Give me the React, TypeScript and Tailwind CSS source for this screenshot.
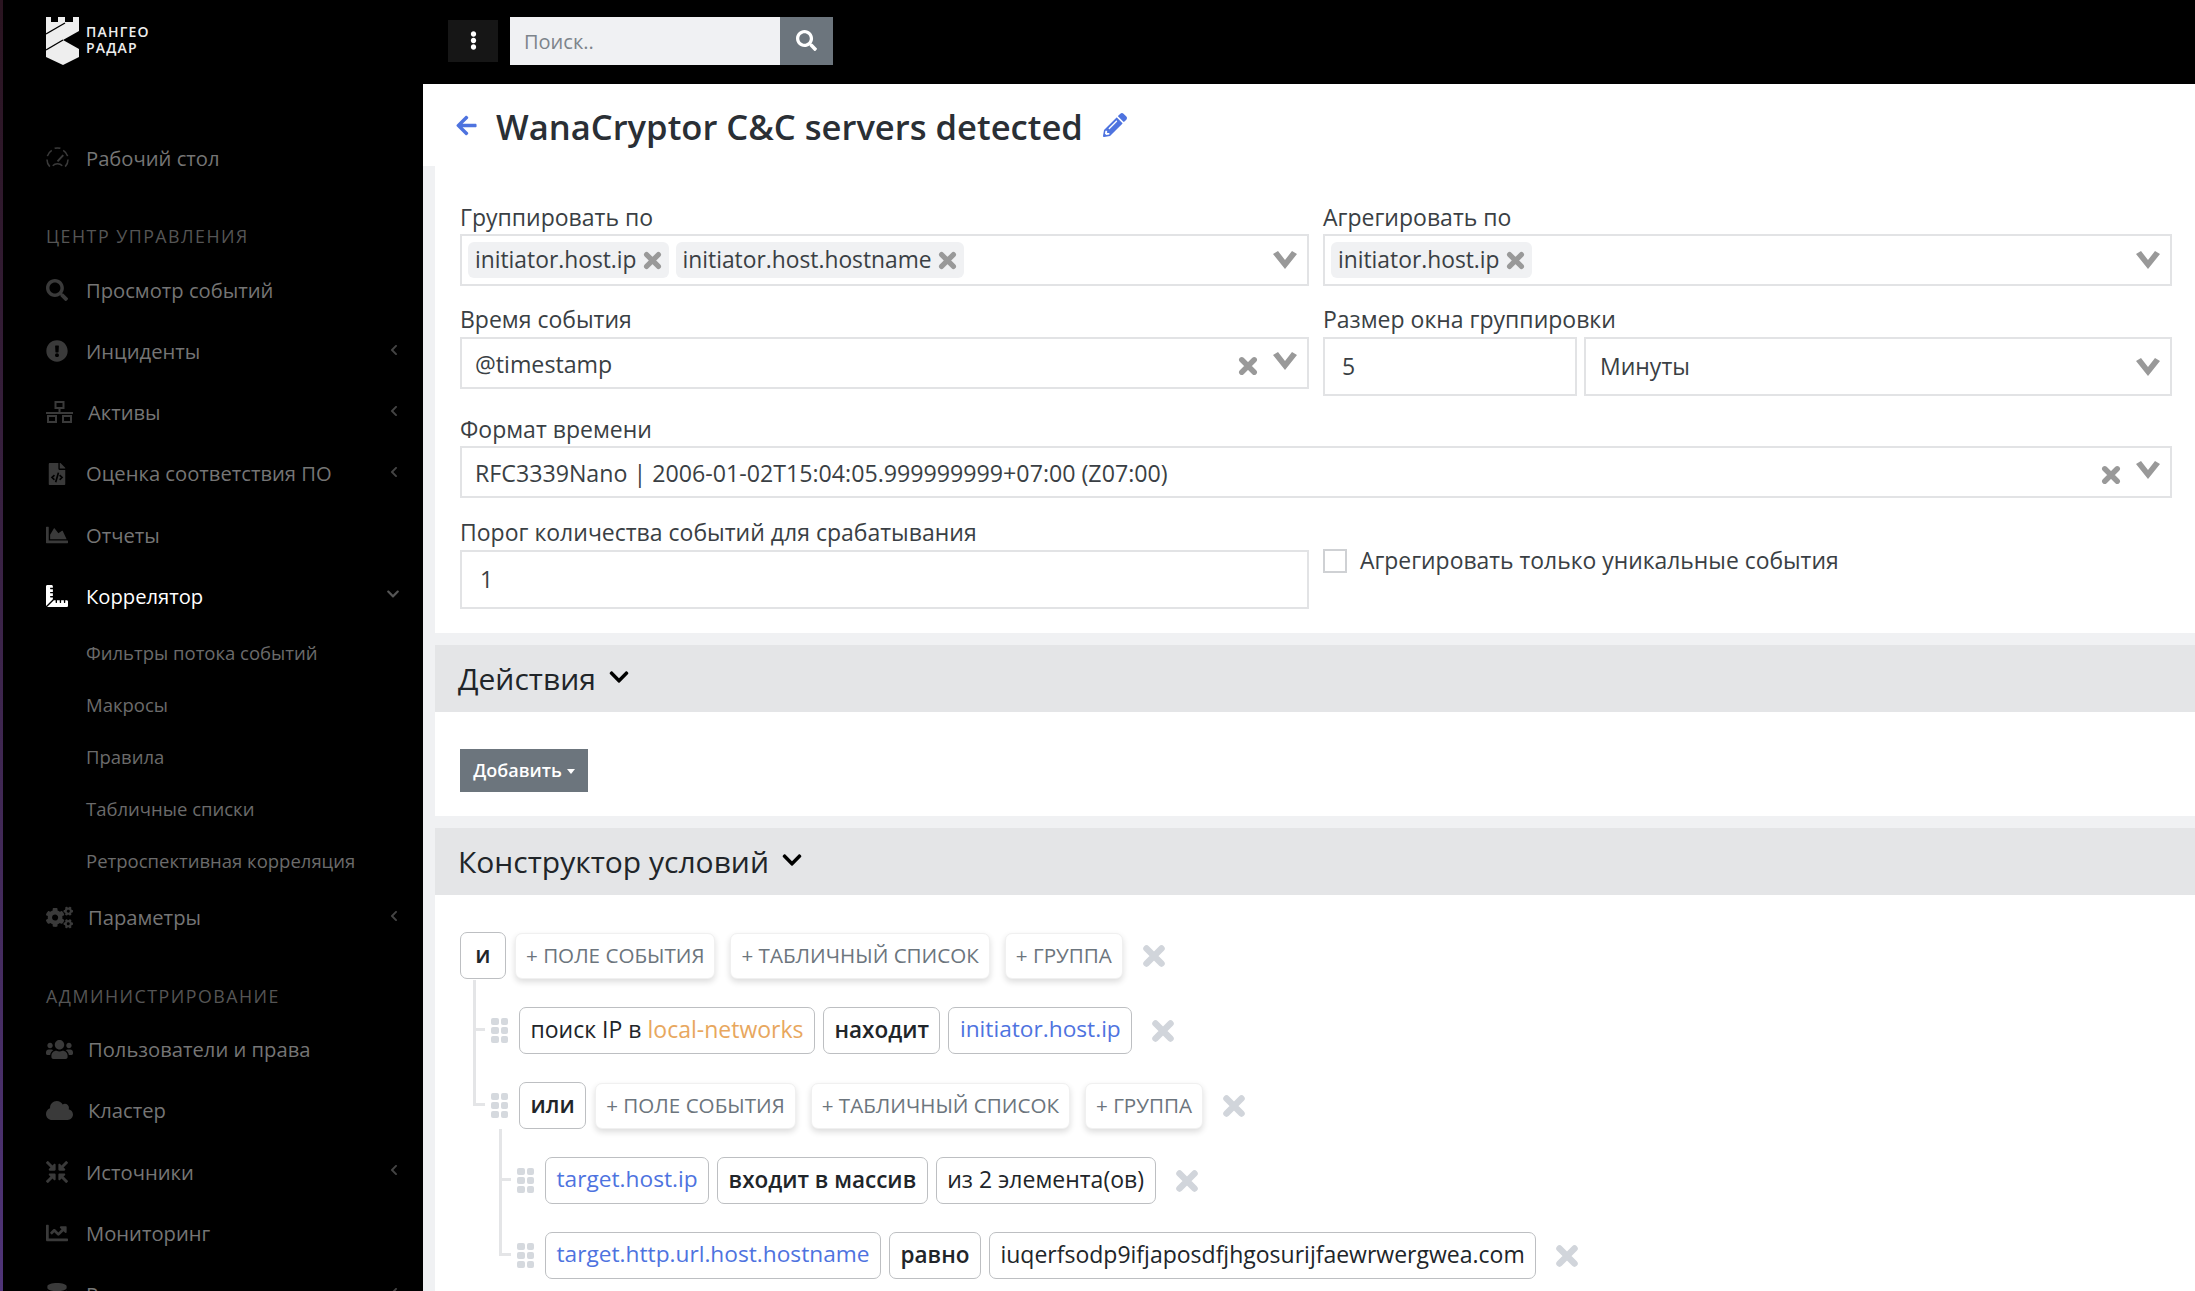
import React from "react";
import {
  FaSearch,
  FaExclamationCircle,
  FaFileCode,
  FaChartArea,
  FaRulerCombined,
  FaCogs,
  FaUsers,
  FaCloud,
  FaCompressArrowsAlt,
  FaChartLine,
  FaDatabase,
  FaChevronLeft,
  FaChevronDown,
  FaEllipsisV,
  FaArrowLeft,
  FaPencilAlt,
} from "react-icons/fa";

const Logo = () => (
  <svg width="34" height="48" viewBox="0 0 34 48" className="shrink-0">
    <polygon
      fill="#eeeeee"
      points="0,0 5,0 5,5 12,5 12,0 19,0 19,5 27,5 27,0 33,0 33,14 17,23 33,32 33,40 17,48 0,40"
    />
    <line x1="0" y1="17" x2="19" y2="6" stroke="#000" strokeWidth="1.4" />
    <line x1="0" y1="33" x2="17" y2="23" stroke="#000" strokeWidth="1.4" />
  </svg>
);

const GaugeIcon = () => (
  <svg width="23" height="23" viewBox="0 0 24 24" fill="none" stroke="currentColor" strokeWidth="1.6">
    <path d="M4 20.5A11 11 0 0 1 1 13M1.4 9.5A11 11 0 0 1 6 3.5M9 1.4A11 11 0 0 1 15 1.4M18 3.5A11 11 0 0 1 22.6 9.5M23 13A11 11 0 0 1 20 20.5" />
    <path d="M7 19.5A7 7 0 0 1 17 19.5" />
    <path d="M12 15L18 8.5" strokeWidth="2" />
  </svg>
);

const NetworkIcon = () => (
  <svg width="27" height="22" viewBox="0 0 27 22" fill="#3a3a3a">
    <path d="M8.5 0h10v8h-10zM10.5 2v4h6V2z" fillRule="evenodd" />
    <rect x="12.5" y="8" width="2" height="4" />
    <rect x="0" y="11" width="27" height="2" />
    <path d="M1 14h10v8H1zM3 16v4h6v-4zM16 14h10v8H16zM18 16v4h6v-4z" fillRule="evenodd" />
  </svg>
);

// thick cross used in selects and condition rows
const Cross = ({ size, className = "" }: { size: number; className?: string }) => (
  <svg width={size} height={size} viewBox="0 0 24 24" className={`shrink-0 ${className}`}>
    <path d="M4.5 4.5L19.5 19.5M19.5 4.5L4.5 19.5" stroke="currentColor" strokeWidth="6.5" strokeLinecap="round" />
  </svg>
);

const Caret = ({ className = "" }: { className?: string }) => (
  <svg width="24" height="18" viewBox="0 0 24 18" fill="#999999" className={`shrink-0 ${className}`}>
    <polygon points="0,3 5,0 12,9 19,0 24,3 12,18" />
  </svg>
);

const NavRow = ({
  icon,
  label,
  wide,
  active,
  arrow,
}: {
  icon: React.ReactNode;
  label: string;
  wide?: boolean;
  active?: boolean;
  arrow?: "left" | "down";
}) => (
  <div className="flex h-[61.2px] shrink-0 items-center pl-[43px] pr-[23px]">
    <span className={`flex items-center ${wide ? "w-[42px]" : "w-[40px]"} ${active ? "text-white" : "text-[#3a3a3a]"}`}>
      {icon}
    </span>
    <span className={`flex-1 text-[20.2px] ${active ? "text-white" : "text-[#757575]"}`}>{label}</span>
    {arrow === "left" && <FaChevronLeft size={12} className="mb-[3px] text-[#444444]" />}
    {arrow === "down" && <FaChevronDown size={14} className="mb-[3px] text-[#555555]" />}
  </div>
);

const SubRow = ({ label }: { label: string }) => (
  <div className="flex h-[52px] shrink-0 items-center pl-[83px] text-[18.5px] text-[#6b6b6b]">{label}</div>
);

const NavHeading = ({ label, className = "h-[70.2px]" }: { label: string; className?: string }) => (
  <div className={`flex shrink-0 items-end pb-[11px] pl-[43px] text-[17.8px] leading-[24px] tracking-[1.5px] text-[#555555] ${className}`}>
    {label}
  </div>
);

const Sidebar = () => (
  <aside className="flex h-full w-[420px] shrink-0 flex-col overflow-hidden bg-black">
    <div className="flex h-[84px] shrink-0 items-start gap-[6px] pl-[43px] pt-[17px]">
      <Logo />
      <div className="mt-[7px] text-[14px] font-semibold leading-[16px] tracking-[1.2px] text-[#eeeeee]">
        <div>ПАНГЕО</div>
        <div>РАДАР</div>
      </div>
    </div>
    <div className="h-[44px] shrink-0" />
    <NavRow icon={<GaugeIcon />} label="Рабочий стол" />
    <NavHeading label="ЦЕНТР УПРАВЛЕНИЯ" />
    <NavRow icon={<FaSearch size={22} />} label="Просмотр событий" />
    <NavRow icon={<FaExclamationCircle size={22} />} label="Инциденты" arrow="left" />
    <NavRow icon={<NetworkIcon />} label="Активы" wide arrow="left" />
    <NavRow icon={<FaFileCode size={22} />} label="Оценка соответствия ПО" arrow="left" />
    <NavRow icon={<FaChartArea size={22} />} label="Отчеты" />
    <NavRow icon={<FaRulerCombined size={22} />} label="Коррелятор" active arrow="down" />
    <SubRow label="Фильтры потока событий" />
    <SubRow label="Макросы" />
    <SubRow label="Правила" />
    <SubRow label="Табличные списки" />
    <SubRow label="Ретроспективная корреляция" />
    <NavRow icon={<FaCogs size={27} />} label="Параметры" wide arrow="left" />
    <NavHeading label="АДМИНИСТРИРОВАНИЕ" className="h-[71px]" />
    <NavRow icon={<FaUsers size={27} />} label="Пользователи и права" wide />
    <NavRow icon={<FaCloud size={27} />} label="Кластер" wide />
    <NavRow icon={<FaCompressArrowsAlt size={22} />} label="Источники" arrow="left" />
    <NavRow icon={<FaChartLine size={22} />} label="Мониторинг" />
    <NavRow icon={<FaDatabase size={22} />} label="Резервирование" arrow="left" />
  </aside>
);

const Topbar = () => (
  <header className="flex h-[84px] shrink-0 items-center bg-black pb-[3px] pl-[25px]">
    <div className="flex h-[42px] w-[50px] items-center justify-center bg-[#161616] text-white">
      <FaEllipsisV size={19} />
    </div>
    <div className="ml-[12px] flex h-[48px] w-[270px] items-center bg-[#f0f1f3] pl-[14px] pt-[2px] text-[20px] text-[#7d848b]">
      Поиск..
    </div>
    <div className="flex h-[48px] w-[53px] items-center justify-center bg-[#6c757d] text-white">
      <FaSearch size={21} />
    </div>
  </header>
);

const Tag = ({ label }: { label: string }) => (
  <span className="flex h-[36px] items-center gap-[6px] rounded-[6px] bg-[#f0f1f3] px-[7px] text-[22.8px] text-[#3a3f44]">
    {label}
    <Cross size={19} className="text-[#999999]" />
  </span>
);

const FieldLabel = ({ text, className = "" }: { text: string; className?: string }) => (
  <div className={`h-[28px] text-[23px] leading-[28px] text-[#3a3f44] ${className}`}>{text}</div>
);

const Box = ({ children, className = "" }: { children: React.ReactNode; className?: string }) => (
  <div className={`flex items-center border-2 border-[#e2e3e5] text-[23px] text-[#3a3f44] ${className}`}>{children}</div>
);

const SelectedValue = ({ value }: { value: string }) => (
  <Box className="h-[52px] pl-[13px] pr-[10px]">
    <span className="mt-[2px] flex-1 text-[23.2px]">{value}</span>
    <Cross size={20} className="mr-[15px] mt-[5px] text-[#999999]" />
    <Caret className="mb-[4px]" />
  </Box>
);

const Form = () => (
  <section className="bg-white pb-[24px] pl-[25px] pr-[23px] pt-[37px]">
    <div className="grid grid-cols-2 gap-x-[14px]">
      <div>
        <FieldLabel text="Группировать по" className="mb-[3px]" />
        <Box className="h-[52px] gap-[7px] pl-[6px] pr-[10px]">
          <Tag label="initiator.host.ip" />
          <Tag label="initiator.host.hostname" />
          <Caret className="ml-auto" />
        </Box>
      </div>
      <div>
        <FieldLabel text="Агрегировать по" className="mb-[3px]" />
        <Box className="h-[52px] pl-[6px] pr-[10px]">
          <Tag label="initiator.host.ip" />
          <Caret className="ml-auto" />
        </Box>
      </div>
      <div className="mt-[19px]">
        <FieldLabel text="Время события" className="mb-[4px]" />
        <SelectedValue value="@timestamp" />
      </div>
      <div className="mt-[19px]">
        <FieldLabel text="Размер окна группировки" className="mb-[4px]" />
        <div className="flex gap-[7px]">
          <Box className="h-[59px] w-[254px] pl-[17px]">5</Box>
          <Box className="h-[59px] flex-1 pl-[14px] pr-[10px]">
            <span className="flex-1">Минуты</span>
            <Caret />
          </Box>
        </div>
      </div>
    </div>
    <FieldLabel text="Формат времени" className="mb-[3px] mt-[19px]" />
    <SelectedValue value="RFC3339Nano | 2006-01-02T15:04:05.999999999+07:00 (Z07:00)" />
    <div className="mt-[20px] grid grid-cols-2 gap-x-[14px]">
      <div>
        <FieldLabel text="Порог количества событий для срабатывания" className="mb-[4px]" />
        <Box className="h-[59px] pl-[18px]">1</Box>
      </div>
      <label className="flex items-start gap-[13px] pt-[31px]">
        <span className="h-[24px] w-[24px] border-2 border-[#cfd1d4] bg-white" />
        <span className="text-[22.9px] leading-[24px] text-[#3a3f44]">Агрегировать только уникальные события</span>
      </label>
    </div>
  </section>
);

const SectionHeader = ({ title }: { title: string }) => (
  <div className="mt-[12px] flex h-[67px] items-center gap-[12px] bg-[#e4e5e7] pl-[23px] text-[30px] font-medium text-[#212529]">
    {title}
    <FaChevronDown size={22} className="mb-[3px] text-black" />
  </div>
);

const AddBtn = ({ label }: { label: string }) => (
  <span className="flex h-[46px] items-center rounded-[7px] border border-[#f0f0f0] bg-white px-[10px] text-[20.6px] text-[#6c757d] shadow-[0_3px_6px_rgba(0,0,0,0.14)]">
    + {label}
  </span>
);

const Chip = ({
  children,
  tone = "text-[23px] text-[#212529]",
  className = "px-[10.5px]",
}: {
  children: React.ReactNode;
  tone?: string;
  className?: string;
}) => (
  <span className={`flex h-[47px] items-center rounded-[7px] border border-[#bdbfc2] bg-white pb-[2px] ${tone} ${className}`}>
    {children}
  </span>
);

const BOLD = "text-[22.5px] font-semibold text-[#212529]";
const BLUE = "text-[22.7px] text-[#4e73df]";

const DragHandle = () => (
  <span className="mr-[11px] grid w-[17px] shrink-0 grid-cols-2 gap-[2px]">
    {[0, 1, 2, 3, 4, 5].map((i) => (
      <span key={i} className="h-[7px] rounded-[2px] bg-[#d5d9de]" />
    ))}
  </span>
);

const Remove = () => <Cross size={24} className="ml-[19px] text-[#d1d5db]" />;

const GroupButtons = () => (
  <div className="ml-[9px] flex items-center gap-[15px]">
    <AddBtn label="ПОЛЕ СОБЫТИЯ" />
    <AddBtn label="ТАБЛИЧНЫЙ СПИСОК" />
    <AddBtn label="ГРУППА" />
  </div>
);

const Rule = ({ indent, children }: { indent: string; children: React.ReactNode }) => (
  <div className={`flex h-[47px] items-center ${indent}`}>
    <DragHandle />
    <div className="flex items-center gap-[8px]">{children}</div>
    <Remove />
  </div>
);

const Builder = () => (
  <div className="relative ml-[25px] mt-[36px] flex flex-col gap-[28px]">
    {/* tree connectors */}
    <div className="absolute left-[13px] top-[48px] h-[126px] w-[12px] border-b-[3px] border-l-[3px] border-[#e4e5e7]" />
    <div className="absolute left-[13px] top-[96px] h-[3px] w-[12px] bg-[#e4e5e7]" />
    <div className="absolute left-[39px] top-[197px] h-[127px] w-[12px] border-b-[3px] border-l-[3px] border-[#e4e5e7]" />
    <div className="absolute left-[39px] top-[246px] h-[3px] w-[12px] bg-[#e4e5e7]" />

    <div className="flex h-[47px] items-center">
      <Chip tone={BOLD} className="w-[46px] justify-center">и</Chip>
      <GroupButtons />
      <Remove />
    </div>
    <Rule indent="ml-[31px]">
      <Chip>
        поиск IP в&nbsp;<span className="text-[#e8a75e]">local-networks</span>
      </Chip>
      <Chip tone={BOLD}>находит</Chip>
      <Chip tone={BLUE}>initiator.host.ip</Chip>
    </Rule>
    <div className="ml-[31px] flex h-[47px] items-center">
      <DragHandle />
      <Chip tone={BOLD}>или</Chip>
      <GroupButtons />
      <Remove />
    </div>
    <Rule indent="ml-[57px]">
      <Chip tone={BLUE}>target.host.ip</Chip>
      <Chip tone={BOLD}>входит в массив</Chip>
      <Chip>из 2 элемента(ов)</Chip>
    </Rule>
    <Rule indent="ml-[57px]">
      <Chip tone={BLUE}>target.http.url.host.hostname</Chip>
      <Chip tone={BOLD}>равно</Chip>
      <Chip>iuqerfsodp9ifjaposdfjhgosurijfaewrwergwea.com</Chip>
    </Rule>
  </div>
);

export default function App() {
  return (
    <div className="flex h-[1291px] w-[2195px] overflow-hidden bg-black font-['Open_Sans',sans-serif]">
      <div className="h-full w-[3px] shrink-0 bg-gradient-to-b from-[#2a1420] to-[#4f3478]" />
      <Sidebar />
      <main className="flex min-w-0 flex-1 flex-col">
        <Topbar />
        <div className="flex h-[82px] shrink-0 items-center bg-white pl-[32px]">
          <FaArrowLeft size={23} className="text-[#4e73df]" />
          <h1 className="ml-[18px] mt-[3px] text-[34.6px] font-semibold text-[#2a2f35]">WanaCryptor C&amp;C servers detected</h1>
          <FaPencilAlt size={24} className="ml-[20px] text-[#4e73df]" />
        </div>
        <div className="flex min-h-0 flex-1 bg-[#f0f1f3] pl-[12px]">
          <div className="min-w-0 flex-1">
            <Form />
            <SectionHeader title="Действия" />
            <div className="flex h-[104px] items-start bg-white pl-[25px] pt-[37px]">
              <button className="flex h-[43px] w-[128px] items-center justify-center gap-[5px] bg-[#6c757d] text-[18px] font-semibold text-white">
                Добавить
                <span className="mt-[1px] h-0 w-0 border-x-[4px] border-t-[5px] border-x-transparent border-t-white" />
              </button>
            </div>
            <SectionHeader title="Конструктор условий" />
            <div className="h-[400px] overflow-hidden bg-white pt-[1px]">
              <Builder />
            </div>
          </div>
        </div>
      </main>
    </div>
  );
}
